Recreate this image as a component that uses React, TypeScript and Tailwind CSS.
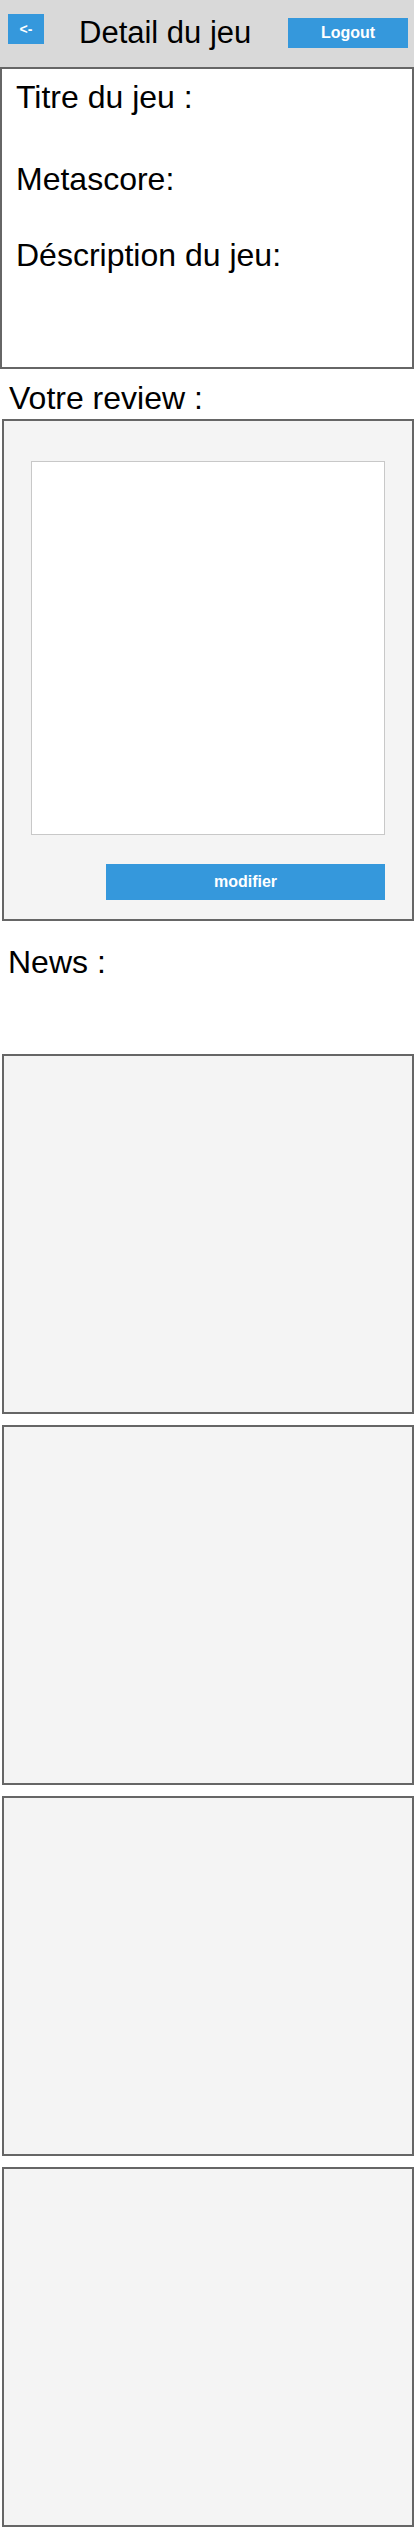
import React from 'react';

const news = [1, 2, 3, 4];

export default function App() {
    return (
        <div className="w-[414px] pb-[2px] bg-white text-black font-['Liberation_Sans',Arial,sans-serif]">
            {/* header */}
            <div className="relative h-[67px] bg-[#d9d9d9] flex items-start">
                <button className="mt-[14px] ml-[8px] w-[36px] h-[30px] bg-[#3598dc] text-white text-[14px] font-bold flex items-center justify-center">
                    &lt;-
                </button>
                <h1 className="ml-[35px] mt-[15px] text-[31px] leading-[36px]">Detail du jeu</h1>
                <button className="ml-auto mr-[6px] mt-[18px] w-[120px] h-[30px] bg-[#3598dc] text-white text-[16px] font-bold flex items-center justify-center">
                    Logout
                </button>
            </div>

            {/* infos du jeu */}
            <div className="h-[302px] border-2 border-[#666666] bg-white pl-[14px] pt-[10px] text-[32px] leading-[36px]">
                <p>Titre du jeu :</p>
                <p className="mt-[46px]">Metascore:</p>
                <p className="mt-[40px]">Déscription du jeu:</p>
            </div>

            <h2 className="mt-[11px] ml-[9px] text-[32px] leading-[36px]">Votre review :</h2>

            <div className="ml-[2px] mt-[3px] h-[502px] border-2 border-[#666666] bg-[#f4f4f4] px-[27px] pt-[40px] flex flex-col">
                <textarea className="h-[374px] w-full border border-[#c8c8c8] bg-white resize-none outline-none" />
                <div className="mt-[29px] flex justify-end">
                    <button className="w-[279px] h-[36px] bg-[#3598dc] text-white text-[16px] font-bold">modifier</button>
                </div>
            </div>

            <h2 className="mt-[23px] ml-[8px] text-[32px] leading-[36px]">News :</h2>

            <div className="mt-[74px] flex flex-col gap-[11px]">
                {news.map((n) => (
                    <div key={n} className="ml-[2px] h-[360px] border-2 border-[#666666] bg-[#f4f4f4]" />
                ))}
            </div>
        </div>
    );
}
